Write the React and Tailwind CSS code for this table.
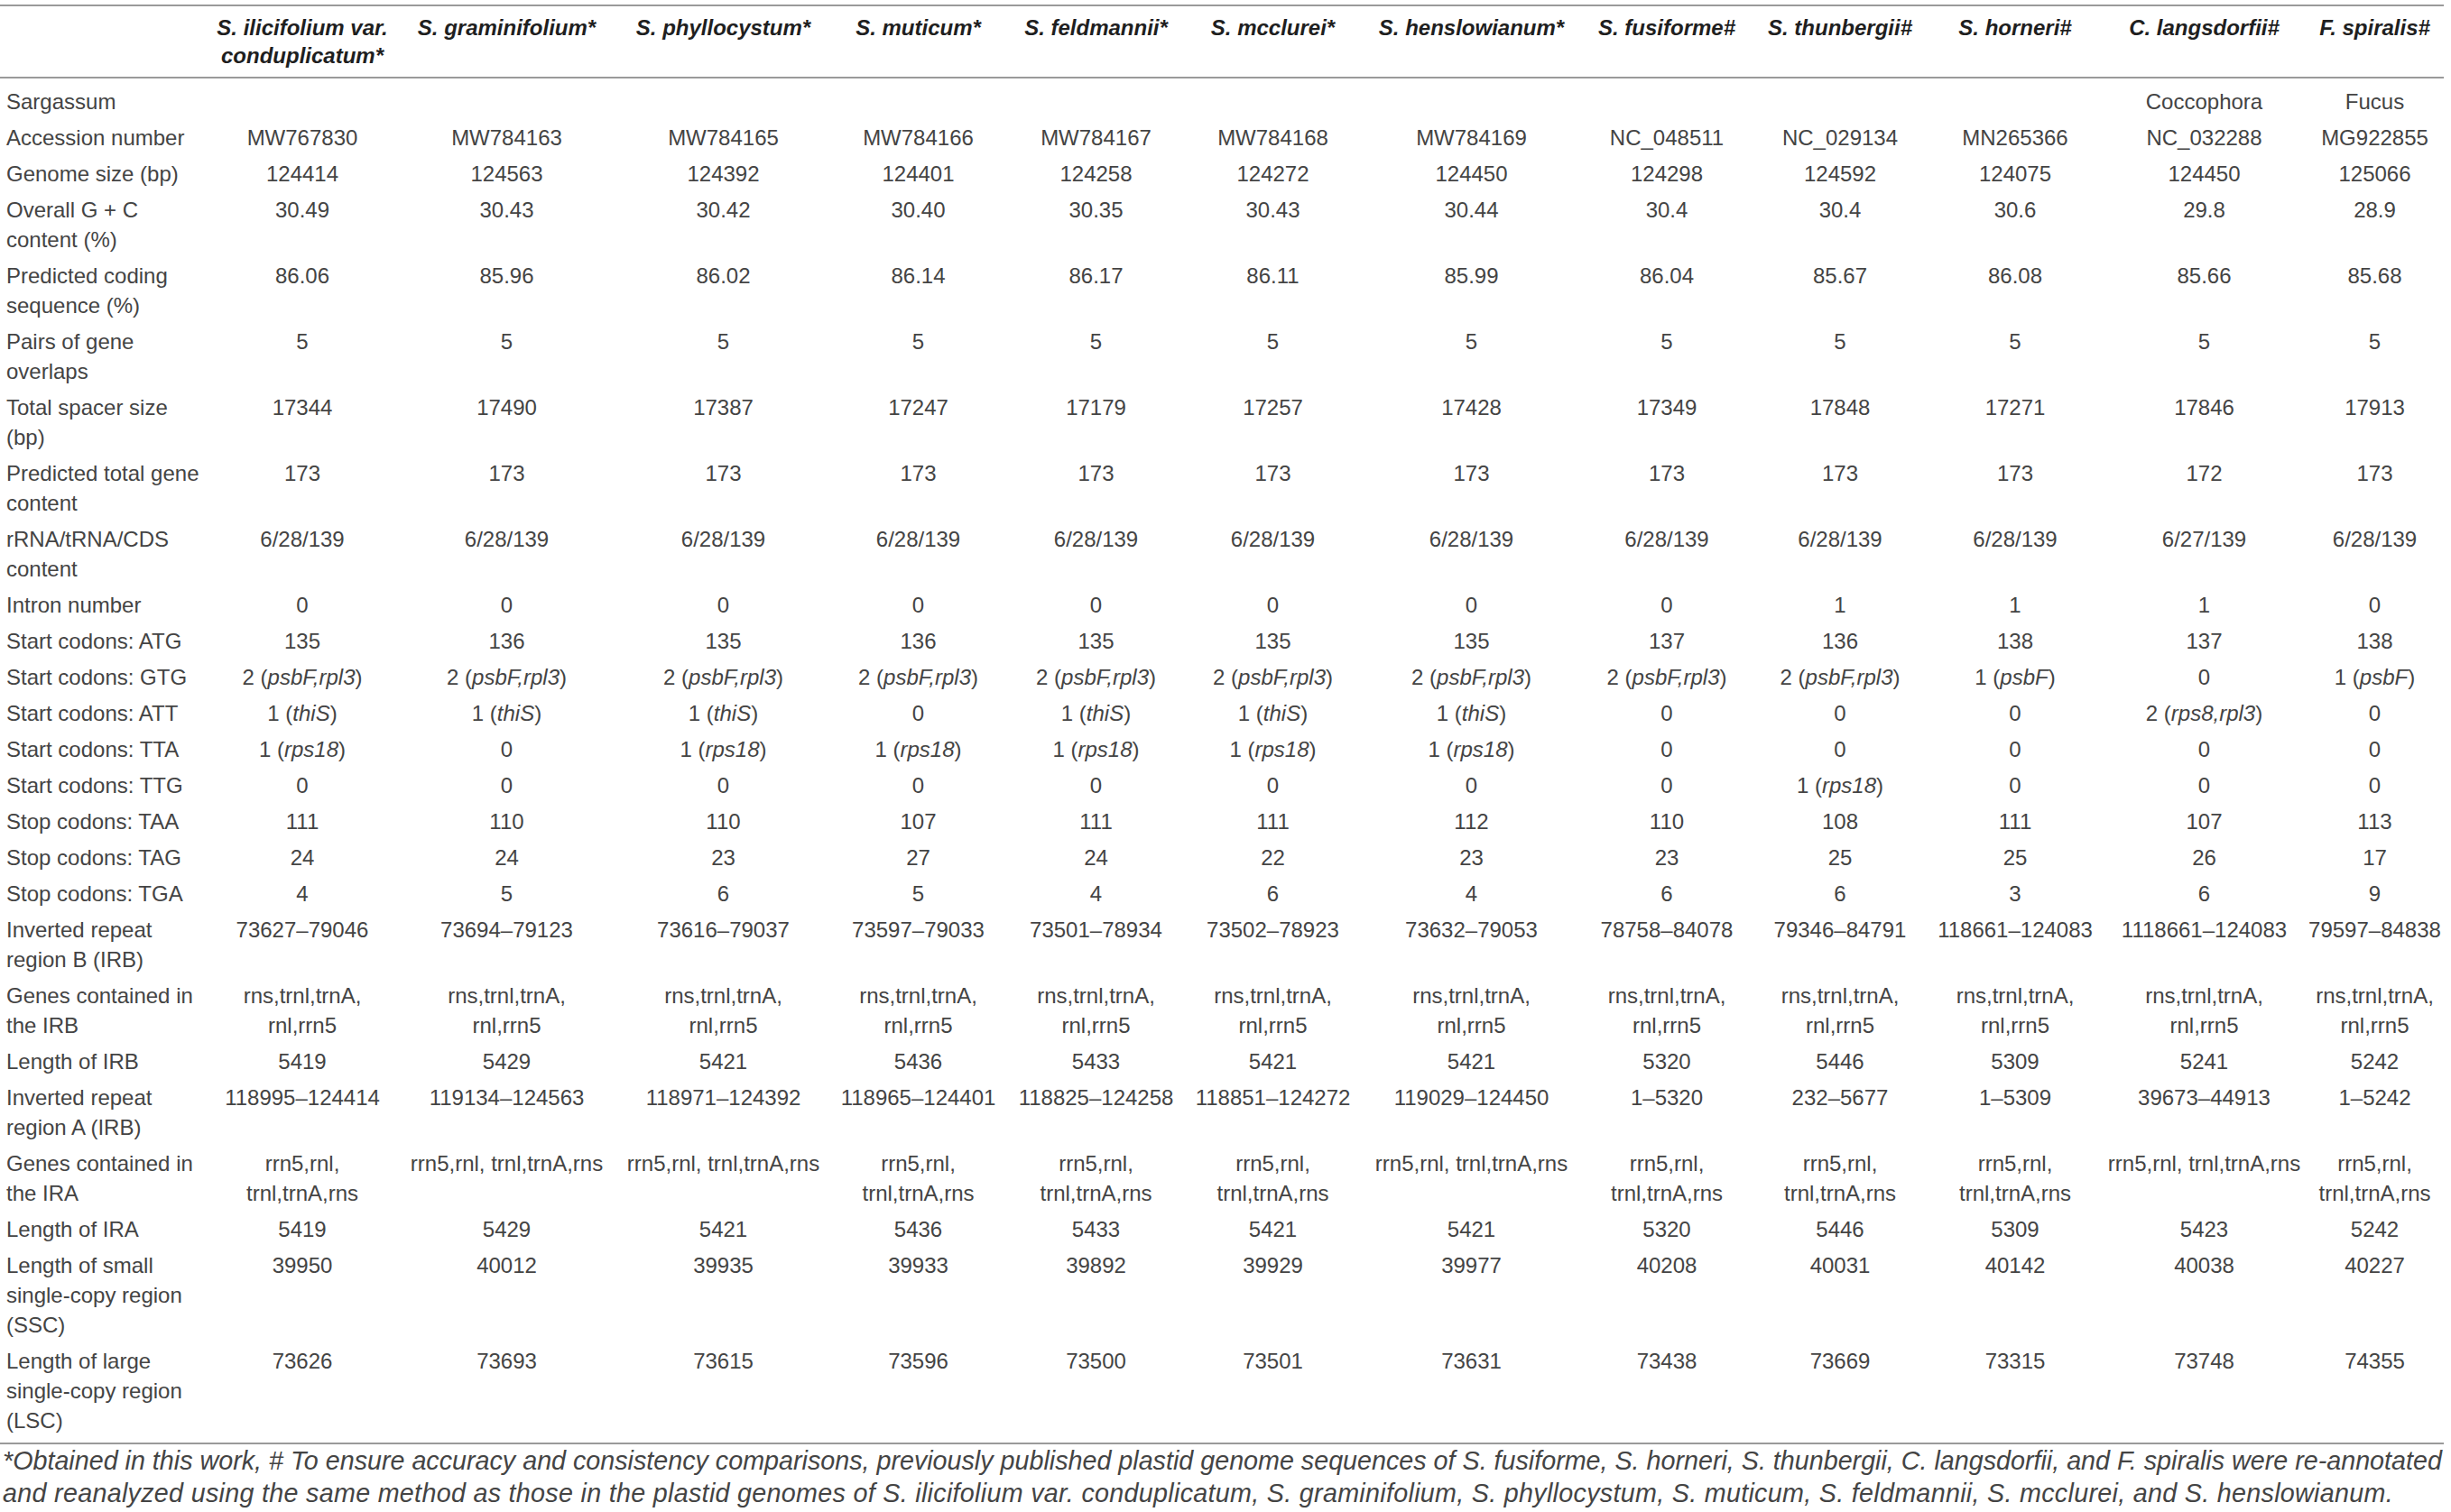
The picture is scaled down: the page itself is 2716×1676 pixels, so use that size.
const species = [
  "S. ilicifolium var.\nconduplicatum*",
  "S. graminifolium*",
  "S. phyllocystum*",
  "S. muticum*",
  "S. feldmannii*",
  "S. mcclurei*",
  "S. henslowianum*",
  "S. fusiforme#",
  "S. thunbergii#",
  "S. horneri#",
  "C. langsdorfii#",
  "F. spiralis#",
];

const irbGenes = "rns,trnl,trnA,\nrnl,rrn5";
const iraTwo = "rrn5,rnl,\ntrnl,trnA,rns";
const iraOne = "rrn5,rnl, trnl,trnA,rns";

const rows = [
  ["Sargassum", ["", "", "", "", "", "", "", "", "", "", "Coccophora", "Fucus"]],
  ["Accession number", ["MW767830", "MW784163", "MW784165", "MW784166", "MW784167", "MW784168", "MW784169", "NC_048511", "NC_029134", "MN265366", "NC_032288", "MG922855"]],
  ["Genome size (bp)", ["124414", "124563", "124392", "124401", "124258", "124272", "124450", "124298", "124592", "124075", "124450", "125066"]],
  ["Overall G + C\ncontent (%)", ["30.49", "30.43", "30.42", "30.40", "30.35", "30.43", "30.44", "30.4", "30.4", "30.6", "29.8", "28.9"]],
  ["Predicted coding\nsequence (%)", ["86.06", "85.96", "86.02", "86.14", "86.17", "86.11", "85.99", "86.04", "85.67", "86.08", "85.66", "85.68"]],
  ["Pairs of gene\noverlaps", ["5", "5", "5", "5", "5", "5", "5", "5", "5", "5", "5", "5"]],
  ["Total spacer size\n(bp)", ["17344", "17490", "17387", "17247", "17179", "17257", "17428", "17349", "17848", "17271", "17846", "17913"]],
  ["Predicted total gene\ncontent", ["173", "173", "173", "173", "173", "173", "173", "173", "173", "173", "172", "173"]],
  ["rRNA/tRNA/CDS\ncontent", ["6/28/139", "6/28/139", "6/28/139", "6/28/139", "6/28/139", "6/28/139", "6/28/139", "6/28/139", "6/28/139", "6/28/139", "6/27/139", "6/28/139"]],
  ["Intron number", ["0", "0", "0", "0", "0", "0", "0", "0", "1", "1", "1", "0"]],
  ["Start codons: ATG", ["135", "136", "135", "136", "135", "135", "135", "137", "136", "138", "137", "138"]],
  ["Start codons: GTG", ["2 (psbF,rpl3)", "2 (psbF,rpl3)", "2 (psbF,rpl3)", "2 (psbF,rpl3)", "2 (psbF,rpl3)", "2 (psbF,rpl3)", "2 (psbF,rpl3)", "2 (psbF,rpl3)", "2 (psbF,rpl3)", "1 (psbF)", "0", "1 (psbF)"]],
  ["Start codons: ATT", ["1 (thiS)", "1 (thiS)", "1 (thiS)", "0", "1 (thiS)", "1 (thiS)", "1 (thiS)", "0", "0", "0", "2 (rps8,rpl3)", "0"]],
  ["Start codons: TTA", ["1 (rps18)", "0", "1 (rps18)", "1 (rps18)", "1 (rps18)", "1 (rps18)", "1 (rps18)", "0", "0", "0", "0", "0"]],
  ["Start codons: TTG", ["0", "0", "0", "0", "0", "0", "0", "0", "1 (rps18)", "0", "0", "0"]],
  ["Stop codons: TAA", ["111", "110", "110", "107", "111", "111", "112", "110", "108", "111", "107", "113"]],
  ["Stop codons: TAG", ["24", "24", "23", "27", "24", "22", "23", "23", "25", "25", "26", "17"]],
  ["Stop codons: TGA", ["4", "5", "6", "5", "4", "6", "4", "6", "6", "3", "6", "9"]],
  ["Inverted repeat\nregion B (IRB)", ["73627–79046", "73694–79123", "73616–79037", "73597–79033", "73501–78934", "73502–78923", "73632–79053", "78758–84078", "79346–84791", "118661–124083", "1118661–124083", "79597–84838"]],
  ["Genes contained in\nthe IRB", Array(12).fill(irbGenes)],
  ["Length of IRB", ["5419", "5429", "5421", "5436", "5433", "5421", "5421", "5320", "5446", "5309", "5241", "5242"]],
  ["Inverted repeat\nregion A (IRB)", ["118995–124414", "119134–124563", "118971–124392", "118965–124401", "118825–124258", "118851–124272", "119029–124450", "1–5320", "232–5677", "1–5309", "39673–44913", "1–5242"]],
  ["Genes contained in\nthe IRA", [iraTwo, iraOne, iraOne, iraTwo, iraTwo, iraTwo, iraOne, iraTwo, iraTwo, iraTwo, iraOne, iraTwo]],
  ["Length of IRA", ["5419", "5429", "5421", "5436", "5433", "5421", "5421", "5320", "5446", "5309", "5423", "5242"]],
  ["Length of small\nsingle-copy region\n(SSC)", ["39950", "40012", "39935", "39933", "39892", "39929", "39977", "40208", "40031", "40142", "40038", "40227"]],
  ["Length of large\nsingle-copy region\n(LSC)", ["73626", "73693", "73615", "73596", "73500", "73501", "73631", "73438", "73669", "73315", "73748", "74355"]],
];

function Value({ text }) {
  // gene names inside brackets are set in italics
  const m = text.match(/^(\d+) \((.+)\)$/);
  if (m) {
    return (
      <>
        {m[1]} (<i>{m[2]}</i>)
      </>
    );
  }
  return text;
}

const cols =
  "grid grid-cols-[232px_206px_247px_233px_199px_195px_197px_243px_190px_194px_194px_225px_153px]";

export default function App() {
  return (
    <div
      className="bg-white w-[2716px] h-[1676px] pt-[5px] text-[#444444] overflow-hidden"
      style={{ fontFamily: '"Liberation Sans", Arial, sans-serif' }}
    >
      <div className="w-[2708px]">
        <div className="h-[2px] bg-[#9a9a9a]" />

        <div className={cols}>
          <div />
          {species.map((s) => (
            <div
              key={s}
              className="text-center whitespace-pre-line font-bold italic text-[24px] leading-[31px] pt-[8px] pb-[8px] text-[#1f1f1f]"
            >
              {s}
            </div>
          ))}
        </div>

        <div className="h-[2px] bg-[#9a9a9a]" />
        <div className="h-[5px]" />

        <div className={cols}>
          {rows.map(([label, vals]) => (
            <div key={label} className="contents">
              <div className="whitespace-pre-line text-[24px] leading-[33px] py-[3.5px] pl-[7px]">
                {label}
              </div>
              {vals.map((v, i) => (
                <div
                  key={i}
                  className="text-center whitespace-pre-line text-[24px] leading-[33px] py-[3.5px]"
                >
                  <Value text={v} />
                </div>
              ))}
            </div>
          ))}
        </div>

        <div className="h-[5px]" />
        <div className="h-[2px] bg-[#9a9a9a]" />

        <p className="italic text-[28.7px] leading-[36px] pl-[3px] whitespace-nowrap">
          *Obtained in this work, # To ensure accuracy and consistency comparisons, previously published plastid genome sequences of S. fusiforme, S. horneri, S. thunbergii, C. langsdorfii, and F. spiralis were re-annotated
          <br />
          <span className="tracking-[0.3px]">
            and reanalyzed using the same method as those in the plastid genomes of S. ilicifolium var. conduplicatum, S. graminifolium, S. phyllocystum, S. muticum, S. feldmannii, S. mcclurei, and S. henslowianum.
          </span>
        </p>
      </div>
    </div>
  );
}
